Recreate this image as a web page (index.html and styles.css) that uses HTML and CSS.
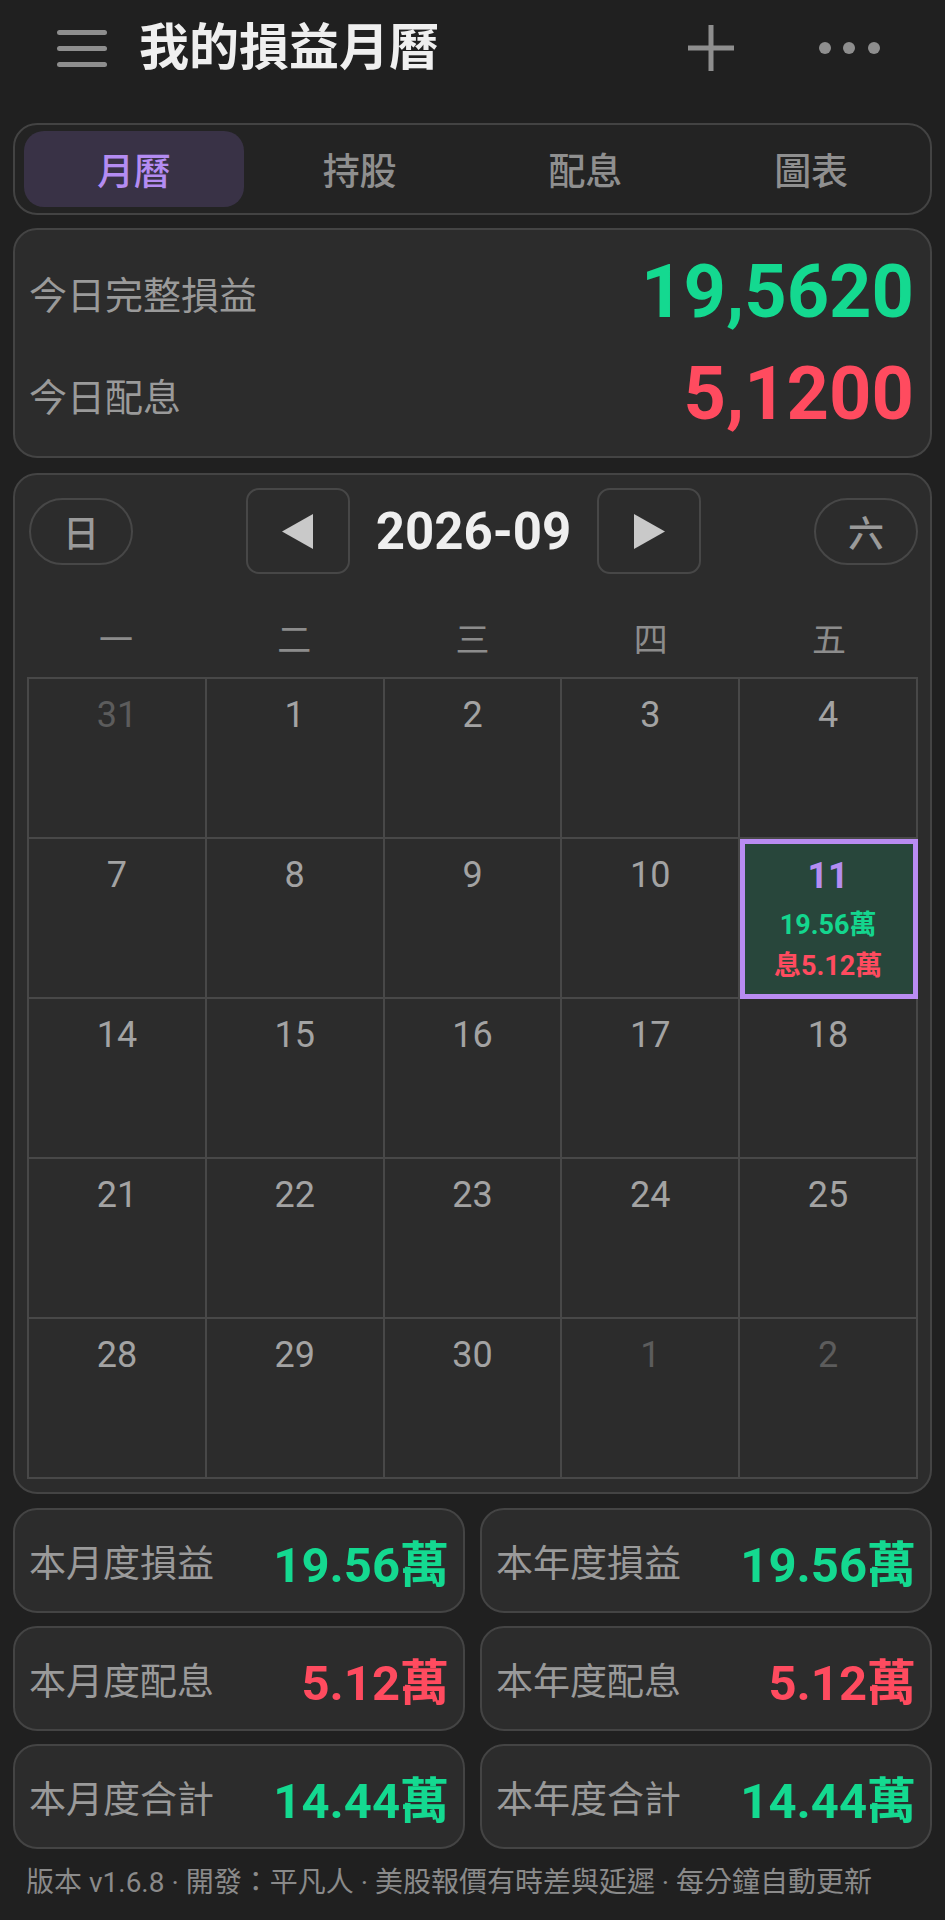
FILE: index.html
```html
<!DOCTYPE html>
<html lang="zh-Hant">

<head>
  <meta charset="UTF-8">
  <meta name="viewport" content="width=device-width, initial-scale=1.0">
  <title>我的損益月曆</title>
  <link rel="stylesheet" href="styles.css">
</head>

<body>
  <header class="app-bar">
    <div class="menu-icon">
      <span></span>
      <span></span>
      <span></span>
    </div>
    <h1 class="app-title">我的損益月曆</h1>
    <svg class="add-icon" width="48" height="46" viewBox="0 0 48 46">
      <path d="M24 0 V46 M1 23 H47" stroke="#8e8e8e" stroke-width="5" />
    </svg>
    <svg class="more-icon" width="62" height="14" viewBox="0 0 62 14">
      <circle cx="6" cy="7" r="6" fill="#8e8e8e" />
      <circle cx="30" cy="7" r="6" fill="#8e8e8e" />
      <circle cx="55" cy="7" r="6" fill="#8e8e8e" />
    </svg>
  </header>

  <main class="page">
    <nav class="tabs">
      <div class="tab active">月曆</div>
      <div class="tab">持股</div>
      <div class="tab">配息</div>
      <div class="tab">圖表</div>
    </nav>

    <section class="card today">
      <div class="today-row">
        <span class="today-label">今日完整損益</span>
        <span class="today-value gain">19,5620</span>
      </div>
      <div class="today-row">
        <span class="today-label">今日配息</span>
        <span class="today-value divi">5,1200</span>
      </div>
    </section>

    <section class="card calendar">
      <div class="cal-nav">
        <button class="pill">日</button>
        <div class="month-switch">
          <button class="arrow-btn">
            <svg width="31" height="35" viewBox="0 0 31 35"><polygon points="31,0 31,35 0,17.5" fill="#c9c9c9" /></svg>
          </button>
          <span class="month-label">2026-09</span>
          <button class="arrow-btn">
            <svg width="31" height="35" viewBox="0 0 31 35"><polygon points="0,0 0,35 31,17.5" fill="#c9c9c9" /></svg>
          </button>
        </div>
        <button class="pill">六</button>
      </div>

      <div class="weekdays">
        <span>一</span>
        <span>二</span>
        <span>三</span>
        <span>四</span>
        <span>五</span>
      </div>

      <div class="days">
        <div class="day other"><span class="num">31</span></div>
        <div class="day"><span class="num">1</span></div>
        <div class="day"><span class="num">2</span></div>
        <div class="day"><span class="num">3</span></div>
        <div class="day"><span class="num">4</span></div>

        <div class="day"><span class="num">7</span></div>
        <div class="day"><span class="num">8</span></div>
        <div class="day"><span class="num">9</span></div>
        <div class="day"><span class="num">10</span></div>
        <div class="day today-cell">
          <span class="num">11</span>
          <span class="cell-gain">19.56萬</span>
          <span class="cell-divi">息5.12萬</span>
        </div>

        <div class="day"><span class="num">14</span></div>
        <div class="day"><span class="num">15</span></div>
        <div class="day"><span class="num">16</span></div>
        <div class="day"><span class="num">17</span></div>
        <div class="day"><span class="num">18</span></div>

        <div class="day"><span class="num">21</span></div>
        <div class="day"><span class="num">22</span></div>
        <div class="day"><span class="num">23</span></div>
        <div class="day"><span class="num">24</span></div>
        <div class="day"><span class="num">25</span></div>

        <div class="day"><span class="num">28</span></div>
        <div class="day"><span class="num">29</span></div>
        <div class="day"><span class="num">30</span></div>
        <div class="day other"><span class="num">1</span></div>
        <div class="day other"><span class="num">2</span></div>
      </div>
    </section>

    <section class="stats">
      <div class="card stat">
        <span class="stat-label">本月度損益</span>
        <span class="stat-value gain">19.56萬</span>
      </div>
      <div class="card stat">
        <span class="stat-label">本年度損益</span>
        <span class="stat-value gain">19.56萬</span>
      </div>
      <div class="card stat">
        <span class="stat-label">本月度配息</span>
        <span class="stat-value divi">5.12萬</span>
      </div>
      <div class="card stat">
        <span class="stat-label">本年度配息</span>
        <span class="stat-value divi">5.12萬</span>
      </div>
      <div class="card stat">
        <span class="stat-label">本月度合計</span>
        <span class="stat-value gain">14.44萬</span>
      </div>
      <div class="card stat">
        <span class="stat-label">本年度合計</span>
        <span class="stat-value gain">14.44萬</span>
      </div>
    </section>

    <footer class="footer">版本 v1.6.8 · 開發：平凡人 · 美股報價有時差與延遲 · 每分鐘自動更新</footer>
  </main>
</body>

</html>
```

FILE: styles.css
```css
* {
  box-sizing: border-box;
  margin: 0;
  padding: 0;
  font-family: Roboto, 'Noto Sans CJK TC', sans-serif;
}

body {
  background: #202020;
  color: #9a9a9a;
  width: 945px;
}

/* top bar */
.app-bar {
  display: flex;
  align-items: center;
  height: 96px;
  padding: 0 64px 0 57px;
}

.menu-icon {
  display: flex;
  flex-direction: column;
  gap: 11px;
  width: 50px;
}

.menu-icon span {
  display: block;
  height: 5px;
  border-radius: 3px;
  background: #8e8e8e;
}

.app-title {
  margin-left: 32px;
  font-size: 50px;
  font-weight: 700;
  line-height: 1;
  color: #efefef;
  flex: 1;
}

.more-icon {
  margin-left: 84px;
}

.page {
  padding: 27px 13px 0;
}

/* tabs */
.tabs {
  display: grid;
  grid-template-columns: repeat(4, 1fr);
  height: 92px;
  padding: 6px 6px;
  border: 2px solid #434343;
  border-radius: 24px;
  background: #232323;
}

.tab {
  display: flex;
  align-items: center;
  justify-content: center;
  margin: 0 3px;
  font-size: 37px;
  font-weight: 500;
  color: #8f8f8f;
  border-radius: 20px;
}

.tab.active {
  background: #393246;
  color: #b48cf2;
}

.card {
  background: #2c2c2c;
  border: 2px solid #444444;
  border-radius: 24px;
}

/* today summary */
.today {
  margin-top: 13px;
  padding: 11px 16px 11px 14px;
}

.today-row {
  display: flex;
  align-items: center;
  justify-content: space-between;
  height: 102px;
}

.today-label {
  font-size: 38px;
  color: #9a9a9a;
}

.today-value {
  font-size: 74px;
  font-weight: 700;
  line-height: 1;
}

.gain {
  color: #14d990;
}

.divi {
  color: #ff4b5f;
}

/* calendar */
.calendar {
  margin-top: 15px;
  padding: 13px 12px 13px;
}

.cal-nav {
  display: flex;
  align-items: center;
  justify-content: space-between;
  height: 86px;
  padding: 0 0 0 2px;
}

button {
  background: transparent;
  cursor: pointer;
}

.pill {
  width: 104px;
  height: 67px;
  border: 2px solid #474747;
  border-radius: 34px;
  font-size: 36px;
  font-weight: 500;
  color: #9a9a9a;
}

.month-switch {
  display: flex;
  align-items: center;
}

.arrow-btn {
  display: flex;
  align-items: center;
  justify-content: center;
  width: 104px;
  height: 86px;
  border: 2px solid #474747;
  border-radius: 13px;
}

.month-label {
  margin: 0 26px;
  font-size: 51px;
  font-weight: 700;
  color: #efefef;
}

.weekdays {
  display: grid;
  grid-template-columns: repeat(5, 1fr);
  align-items: center;
  height: 80px;
  margin-top: 23px;
  text-align: center;
  font-size: 34px;
  color: #8c8c8c;
}

.days {
  display: grid;
  grid-template-columns: repeat(5, 1fr);
  border-top: 2px solid #484848;
  border-left: 2px solid #484848;
}

.day {
  display: flex;
  flex-direction: column;
  align-items: center;
  height: 160px;
  padding-top: 15px;
  border-right: 2px solid #484848;
  border-bottom: 2px solid #484848;
}

.num {
  font-size: 36px;
  line-height: 43px;
  color: #a3a3a3;
}

.day.other .num {
  color: #5c5c5c;
}

.day.today-cell {
  background: #28463b;
  outline: 5px solid #b98cf2;
  outline-offset: -5px;
  padding-top: 16px;
}

.today-cell .num {
  font-weight: 700;
  color: #b48cf2;
}

.cell-gain,
.cell-divi {
  font-size: 27px;
  font-weight: 700;
  line-height: 41px;
}

.cell-gain {
  margin-top: 7px;
  color: #14d68e;
}

.cell-divi {
  color: #ff4b5f;
}

/* month / year totals */
.stats {
  display: grid;
  grid-template-columns: 1fr 1fr;
  column-gap: 15px;
  row-gap: 13px;
  margin-top: 14px;
}

.stat {
  display: flex;
  align-items: center;
  justify-content: space-between;
  height: 105px;
  padding: 0 14px 0 14px;
}

.stat-label {
  font-size: 37px;
  color: #9a9a9a;
}

.stat-value {
  font-size: 49px;
  font-weight: 700;
}

.footer {
  margin-top: 16px;
  padding-left: 13px;
  font-size: 28px;
  line-height: 36px;
  color: #8a8a8a;
  white-space: nowrap;
}
```
